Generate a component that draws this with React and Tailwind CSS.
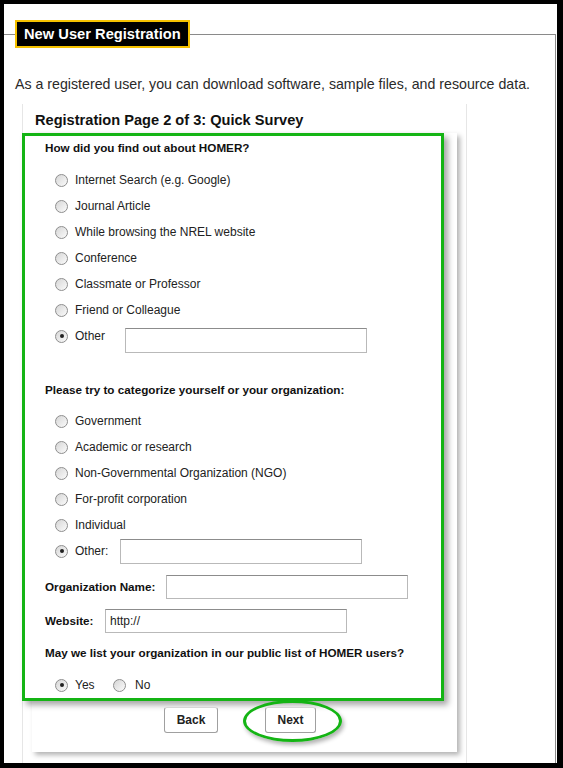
import React from 'react'

const font = { fontFamily: '"Liberation Sans", Arial, sans-serif' }

function Radio({ checked }) {
  return (
    <span className="relative inline-flex h-[13px] w-[13px] shrink-0 items-center justify-center rounded-full border border-[#8e8e8e] bg-gradient-to-br from-[#d6d6d6] to-[#fbfbfb]">
      {checked && <span className="h-[4px] w-[4px] rounded-full bg-[#222]" />}
    </span>
  )
}

function Option({ label, checked }) {
  return (
    <div className="flex h-[26px] items-center gap-[7px] pl-[10px] text-[12px] text-[#222]">
      <Radio checked={checked} />
      <span className="whitespace-nowrap">{label}</span>
    </div>
  )
}

function Field({ className, value }) {
  return (
    <div className={'flex items-center border border-[#b9b9b9] border-t-[#8c8c8c] bg-white px-[4px] text-[12px] text-[#222] ' + className}>
      {value}
    </div>
  )
}

const sources = [
  'Internet Search (e.g. Google)',
  'Journal Article',
  'While browsing the NREL website',
  'Conference',
  'Classmate or Professor',
  'Friend or Colleague',
]

const kinds = [
  'Government',
  'Academic or research',
  'Non-Governmental Organization (NGO)',
  'For-profit corporation',
  'Individual',
]

export default function App() {
  return (
    <div className="h-[768px] w-[563px] bg-black pl-[4px] pt-[4px]" style={font}>
      <div className="h-[759px] w-[553px] overflow-hidden bg-white">
        <fieldset className="mt-[16px] h-[760px] w-[552px] border-t border-r border-[#8a8a8a] pl-[11px]">
          <legend className="h-[28px] whitespace-nowrap border-2 border-[#f6c200] bg-black px-[7px] text-[14.7px] font-bold leading-[24px] text-white">
            New User Registration
          </legend>

          <p className="mt-[27px] whitespace-nowrap text-[14.2px] leading-[18px] text-[#2a2a2a]">
            As a registered user, you can download software, sample files, and resource data.
          </p>

          <div className="ml-[7px] mt-[11px] h-[700px] w-[445px] border-x border-[#e6e6e6]">
            <h2 className="pl-[12px] pt-[7px] text-[14.6px] font-bold leading-[18px] text-[#111]">
              Registration Page 2 of 3: Quick Survey
            </h2>

            <div className="relative ml-[9px] mt-[4px] w-[425px] bg-white pb-[19px] shadow-[3px_3px_5px_rgba(0,0,0,0.3)]">
              <div className="-ml-[10px] w-[422px] border-[3px] border-[#14b414] bg-white pl-[20px] shadow-[4px_4px_6px_rgba(0,0,0,0.35)]">
                <div className="flex h-[24px] items-center text-[11.7px] font-bold text-[#111]">
                  How did you find out about HOMER?
                </div>
                <div className="mt-[7px]">
                  {sources.map((s) => (
                    <Option key={s} label={s} />
                  ))}
                  <div className="flex items-start">
                    <div className="w-[80px]">
                      <Option label="Other" checked />
                    </div>
                    <Field className="mt-[5px] h-[25px] w-[242px]" />
                  </div>
                </div>

                <div className="mt-[27px] flex h-[20px] items-center text-[11.7px] font-bold text-[#111]">
                  Please try to categorize yourself or your organization:
                </div>
                <div className="mt-[8px]">
                  {kinds.map((s) => (
                    <Option key={s} label={s} />
                  ))}
                  <div className="flex items-start">
                    <div className="w-[75px]">
                      <Option label="Other:" checked />
                    </div>
                    <Field className="mt-[1px] h-[25px] w-[242px]" />
                  </div>
                </div>

                <div className="mt-[11px] flex h-[24px] items-center text-[11.7px] font-bold text-[#111]">
                  <span className="w-[121px] whitespace-nowrap">Organization Name:</span>
                  <Field className="h-[24px] w-[242px]" />
                </div>
                <div className="mt-[10px] flex h-[24px] items-center text-[11.7px] font-bold text-[#111]">
                  <span className="w-[60px] whitespace-nowrap">Website:</span>
                  <Field className="h-[24px] w-[242px] font-normal" value="http://" />
                </div>

                <div className="mt-[10px] flex h-[20px] items-center whitespace-nowrap text-[11.7px] font-bold text-[#111]">
                  May we list your organization in our public list of HOMER users?
                </div>
                <div className="mt-[9px] flex">
                  <div className="w-[68px]">
                    <Option label="Yes" checked />
                  </div>
                  <div className="flex h-[26px] items-center gap-[9px] text-[12px] text-[#222]">
                    <Radio />
                    <span>No</span>
                  </div>
                </div>
              </div>

              <div className="mt-[6px] flex gap-[47px] pl-[132px]">
                <button className="h-[26px] w-[54px] rounded-[3px] border border-[#a0a0a0] border-t-[#d6d6d6] bg-white text-[12px] font-bold text-[#222]">
                  Back
                </button>
                <button className="h-[26px] w-[51px] rounded-[3px] border border-[#a0a0a0] border-t-[#d6d6d6] bg-white text-[12px] font-bold text-[#222]">
                  Next
                </button>
              </div>

              <div className="pointer-events-none absolute left-[211px] top-[567px] h-[42px] w-[99px] rounded-[50%] border-[3px] border-[#14b414] shadow-[2px_3px_4px_rgba(0,0,0,0.3)]" />
            </div>
          </div>
        </fieldset>
      </div>
    </div>
  )
}
